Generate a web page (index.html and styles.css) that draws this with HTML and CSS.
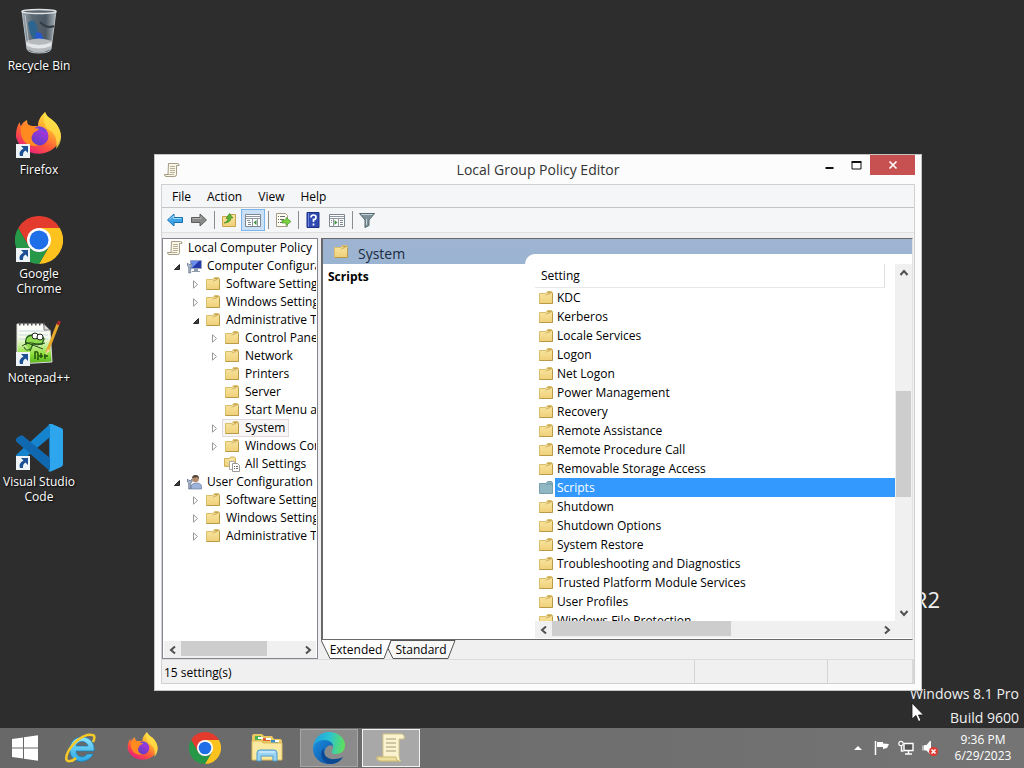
FILE: index.html
```html
<!DOCTYPE html>
<html lang="en">
<head>
  <meta charset="utf-8">
  <title>Local Group Policy Editor</title>
  <link rel="stylesheet" href="styles.css">
</head>
<body>
  <svg class="sprite" aria-hidden="true">
    <defs>
      <linearGradient id="gFolder" x1="0" y1="0" x2="0" y2="1"><stop offset="0" stop-color="#f8e6a4"/><stop offset="1" stop-color="#f0d078"/></linearGradient>
      <linearGradient id="gFox" x1=".85" y1="0" x2=".2" y2="1"><stop offset="0" stop-color="#fff44f"/><stop offset=".35" stop-color="#ffb02e"/><stop offset=".65" stop-color="#ff5a36"/><stop offset="1" stop-color="#e31587"/></linearGradient>
      <linearGradient id="gFoxIn" x1=".8" y1="0" x2=".3" y2="1"><stop offset="0" stop-color="#b833e1"/><stop offset="1" stop-color="#5b3fc4"/></linearGradient>
      <linearGradient id="gBin" x1="0" y1="0" x2="1" y2="0"><stop offset="0" stop-color="#9aa4ac"/><stop offset=".3" stop-color="#5b6974"/><stop offset=".7" stop-color="#4c5863"/><stop offset="1" stop-color="#aab3ba"/></linearGradient>
      <linearGradient id="gNote" x1="0" y1="0" x2="0" y2="1"><stop offset="0" stop-color="#fff"/><stop offset=".35" stop-color="#f4fbe8"/><stop offset=".75" stop-color="#8fe03a"/><stop offset="1" stop-color="#4fae1c"/></linearGradient>
      <linearGradient id="gEdge" x1="0" y1=".3" x2="1" y2=".4"><stop offset="0" stop-color="#1f9fe0"/><stop offset=".5" stop-color="#2bc3d2"/><stop offset="1" stop-color="#5fe05a"/></linearGradient>
      <linearGradient id="gEdgeB" x1="0" y1="0" x2="1" y2="1"><stop offset="0" stop-color="#1b8fe0"/><stop offset="1" stop-color="#0d4da0"/></linearGradient>
      <linearGradient id="gIe" x1="0" y1="0" x2="0" y2="1"><stop offset="0" stop-color="#8fe3fb"/><stop offset="1" stop-color="#2aa8e6"/></linearGradient>
    </defs>
    <symbol id="folder" viewBox="0 0 16 16">
      <path d="M1.500 3.500h6.500l1.500-2h4l1 1.500v10.500h-13z" fill="url(#gFolder)" stroke="#d9be6c"/>
      <path d="M8 5.500l1.500-1.500h2l1-1.500 2 .5M9.500 2.500h3" stroke="#b9963d" stroke-width=".8" fill="none"/>
      <path d="M14.500 4v9.500h-13" stroke="#b89a48" fill="none"/>
    </symbol>
    <symbol id="folder-selected" viewBox="0 0 16 16">
      <path d="M1.500 3.500h6.500l1.500-2h4l1 1.500v10.500h-13z" fill="#8fb8c4" stroke="#789fab"/>
      <path d="M8 5.500l1.500-1.500h5" stroke="#68919f" fill="none"/>
    </symbol>
    <symbol id="scroll" viewBox="0 0 16 16">
      <path d="M4.500 1.500h9q2 0 1.500 2h-2.500v9q0 2-2 2h-8.500q-1.500 0-1.500-2h3.500z" fill="#fbf7e4" stroke="#a39c88"/>
      <path d="M6 4.500h5M6 6.500h5M6 8.500h5M6 10.500h5M4 12.500h6" stroke="#b5af9c" fill="none"/>
    </symbol>
    <symbol id="closed" viewBox="0 0 9 9"><path d="M2.500 .8v7.400l4-3.700z" fill="#fff" stroke="#999"/></symbol>
    <symbol id="open" viewBox="0 0 9 9"><path d="M7.500 2.500v5h-5z" fill="#404040" stroke="#262626"/></symbol>
    <symbol id="computer" viewBox="0 0 16 16">
      <path d="M4.500 2.500h11v8h-11z" fill="#2538a8" stroke="#9aa8c4"/><path d="M5 3h8l-7 7h-1z" fill="#6c8df0"/>
      <path d="M8 11h4v2h2v1h-8v-1h2z" fill="#8e9aad"/>
      <path d="M1.500 5v3l1.200 1v6h2v-6l1.300-1v-3l-1.300 1.500h-1.700z" fill="#a8b4c8" stroke="#657792" stroke-width=".7"/>
    </symbol>
    <symbol id="user" viewBox="0 0 16 16">
      <path d="M5 15v-3q1-3 5-3 5 0 5.500 3v3z" fill="#9eb3d8" stroke="#6b80a8" stroke-width=".7"/><circle cx="9.500" cy="5" r="3.300" fill="#b48b6c"/><path d="M6 4q.5-3.500 4-3 3 0 3 4l-2-2q-3 1-5 1z" fill="#51443b"/>
      <path d="M1.500 5v3l1.200 1v6h2v-6l1.300-1v-3l-1.300 1.500h-1.700z" fill="#a8b4c8" stroke="#566884" stroke-width=".7"/>
    </symbol>
    <symbol id="settings" viewBox="0 0 16 16">
      <path d="M.5 2.500h5l1-1.500h4l1 1.500v8h-11z" fill="url(#gFolder)" stroke="#cfb15a"/>
      <path d="M5.500 5.500h5v8h-5z" fill="#fff" stroke="#aaa"/><path d="M8.500 7.500h5l2 2v6h-7z" fill="#fff" stroke="#999"/><path d="M10 10.500h1m1 0h2m-4 2h1m1 0h2" stroke="#666"/>
    </symbol>
    <symbol id="shortcut" viewBox="0 0 14 14">
      <path d="M0 0h14v14h-14z" fill="#eef3f8"/><path d="M5 2h7v7l-2.500-2.500q-3 1.500-2.500 5.500h-3q-2-4.500 3.500-7.500z" fill="#1c4f94"/>
    </symbol>
    <symbol id="firefox" viewBox="0 0 48 48">
      <path d="M30 0c1 3 3 5 6 7 6 4 10 11 10 18a23 21 0 0 1-45 0c0-7 1-11 4-15 0 2 0 3 1 4 1-3 4-5 6-6 0 3 1 5 3 6h8c0-6 3-10 7-14z" fill="url(#gFox)"/>
      <path d="M30 0c1 3 3 5 6 7 6 4 10 11 10 18 0 5-2 9-5 12 2-9-1-16-7-19-5-3-6-11-4-18z" fill="#ffe14a" opacity=".75"/>
      <circle cx="24" cy="24" r="9.500" fill="url(#gFoxIn)"/>
      <path d="M6 14c5-3 10 0 13 0s5 1 5 3c-2 3-5 2-6 5-4 5 1 11 6 11-11 4-20-5-18-19z" fill="#ff8a20"/>
      <path d="M19 16c6-4 13 0 13 6-3-4-7-4-10-3l3-2z" fill="#7748d8"/>
    </symbol>
    <symbol id="chrome" viewBox="0 0 48 48">
      <path d="M24 12h20.800a24 24 0 0 0-41.600 0l10.400 18z" fill="#e33b2e"/>
      <path d="M24 12h20.800a24 24 0 0 1-20.800 36l10.400-18z" fill="#fcc31e"/>
      <path d="M13.600 30a12 12 0 0 0 20.800 0l-10.400 18a24 24 0 0 1-20.800-36z" fill="#279847"/>
      <circle cx="24" cy="24" r="12" fill="#fff"/><circle cx="24" cy="24" r="9.500" fill="#1f70e8"/>
    </symbol>
    <symbol id="chevron-up" viewBox="0 0 10 10"><path d="M1.500 7l3.500-4 3.500 4" fill="none" stroke="#505050" stroke-width="2"/></symbol>
    <symbol id="chevron-down" viewBox="0 0 10 10"><path d="M1.500 3l3.500 4 3.500-4" fill="none" stroke="#505050" stroke-width="2"/></symbol>
    <symbol id="chevron-left" viewBox="0 0 10 10"><path d="M7 1.500l-4 3.500 4 3.500" fill="none" stroke="#505050" stroke-width="2"/></symbol>
    <symbol id="chevron-right" viewBox="0 0 10 10"><path d="M3 1.500l4 3.500-4 3.500" fill="none" stroke="#505050" stroke-width="2"/></symbol>
  </svg>

  <main class="desktop">
    <div class="shortcuts">
      <a class="shortcut" href="#">
        <svg class="shortcut-icon" viewBox="0 0 48 48">
          <path d="M7 3h34l-5 38q-1 4-12 4t-12-4z" fill="url(#gBin)" stroke="#b7bfc5"/>
          <path d="M13 15q6-6 9 3l1 7 7 7h-11l-4-7z" fill="#2d658e"/><path d="M21 24l5 1 3 7-9 1z" fill="#2858cf"/>
          <path d="M25 14q7 7 14 4" stroke="#343c44" stroke-width="2" fill="none"/>
          <path d="M11 33q13-5 26 0l-1 8q-12 7-24 0z" fill="#b6babd"/><path d="M11 34q13 6 26 0l-1 4q-12 5-24 0z" fill="#e4e6e7"/>
          <ellipse cx="24" cy="3.500" rx="17" ry="2" fill="#5c666e" stroke="#dfe3e6" stroke-width="1.500"/>
          <path d="M10 7l4 31" stroke="#d6dce0" opacity=".7"/>
        </svg>
        <span>Recycle Bin</span>
      </a>
      <a class="shortcut" href="#">
        <svg class="shortcut-icon" viewBox="0 0 48 48"><use href="#firefox" width="48" height="48"/><use href="#shortcut" x="1" y="32" width="14" height="14"/></svg>
        <span>Firefox</span>
      </a>
      <a class="shortcut" href="#">
        <svg class="shortcut-icon" viewBox="0 0 48 48"><use href="#chrome" width="48" height="48"/><use href="#shortcut" x="1" y="32" width="14" height="14"/></svg>
        <span>Google Chrome</span>
      </a>
      <a class="shortcut" href="#">
        <svg class="shortcut-icon" viewBox="0 0 48 48">
          <path d="M2 4h27l6 6 2 32-35 2z" fill="url(#gNote)" stroke="#ddd"/>
          <path d="M4 4h26" stroke="#555" stroke-width="3" stroke-dasharray="1.500 2.500"/><path d="M4 11h28M4 15h29M4 19h29" stroke="#c7d6df"/>
          <path d="M29 4v6h6z" fill="#ddd" stroke="#777"/>
          <path d="M11 25q-2-9 6-10l5 3q5-4 7 1l-2 5h-9l-3 7" fill="#8edc4d" stroke="#27601a" stroke-width="1.300"/>
          <circle cx="20" cy="16" r="3" fill="#fff" stroke="#222"/><circle cx="25" cy="17" r="3" fill="#fff" stroke="#222"/>
          <path d="M7 26q8-6 15-1l8-2M10 22l18 7M15 29q-4 3-6-2" stroke="#284b1b" fill="none"/>
          <path d="M20 39v-7q3-1 3 2v6M26 33v5M24 36h4M30 34v5M29 36h4" stroke="#26520d" stroke-width="1.500" fill="none"/>
          <path d="M32 32 43 4" stroke="#e6a92c" stroke-width="3"/><path d="M43 5l1.500-4" stroke="#b22b2b" stroke-width="3"/><path d="M33 29l-3 6 5-4z" fill="#f2d7a3"/>
          <use href="#shortcut" x="1" y="32" width="14" height="14"/>
        </svg>
        <span>Notepad++</span>
      </a>
      <a class="shortcut" href="#">
        <svg class="shortcut-icon" viewBox="0 0 48 48">
          <path d="M35 0 48 5v36L35 47 2 18q-2-2 0-4l3-2q2-1 3 0l26 22V13z" fill="#1478c5"/>
          <path d="M35 13 8 36q-1 1-3 0l-3-3q-2-1 0-3L35 0z" fill="#1583cd"/>
          <path d="M2 18q-2-2 0-4l3-2q2-1 3 0l27 22v13z" fill="#1069b0"/>
          <path d="M33 0q2-1 4 0l9 4q2 1 2 3v33q0 2-2 3l-9 4q-2 1-4 0 2 0 2-4V4q0-4-2-4z" fill="#2ea6ee"/>
          <use href="#shortcut" x="1" y="32" width="14" height="14"/>
        </svg>
        <span>Visual Studio Code</span>
      </a>
    </div>

    <div class="edition">R2</div>
    <div class="watermark">
      <div>Windows 8.1 Pro</div>
      <div>Build 9600</div>
    </div>

    <section class="window">
      <header class="titlebar">
        <svg class="titlebar-icon icon" viewBox="0 0 16 16"><use href="#scroll"/></svg>
        <h1 class="title">Local Group Policy Editor</h1>
        <div class="window-buttons">
          <button class="window-btn" aria-label="Minimize"><svg width="11" height="11" viewBox="0 0 11 11"><path d="M1.500 8h8" stroke="#111" stroke-width="2"/></svg></button>
          <button class="window-btn" aria-label="Maximize"><svg width="11" height="11" viewBox="0 0 11 11"><path d="M1 2.500h9v6.500h-9z" fill="none" stroke="#111"/><path d="M.5 2h10" stroke="#111" stroke-width="2"/></svg></button>
          <button class="window-btn window-close" aria-label="Close"><svg width="10" height="10" viewBox="0 0 10 10"><path d="M1.500 1.500l7 7M8.500 1.500l-7 7" stroke="#fff" stroke-width="1.600"/></svg></button>
        </div>
      </header>

      <div class="client">
        <nav class="menubar">
          <button class="menu">File</button>
          <button class="menu">Action</button>
          <button class="menu">View</button>
          <button class="menu">Help</button>
        </nav>

        <div class="toolbar">
          <button class="tool" aria-label="Back"><svg class="icon" viewBox="0 0 16 16"><path d="M.5 8l6.500-6v3.500h8.500v5h-8.500v3.500z" fill="#3da4e8" stroke="#1c6fae"/><path d="M2.500 7.500l4-3.500v2.500h8" stroke="#9bdcff" fill="none"/></svg></button>
          <button class="tool" aria-label="Forward"><svg class="icon" viewBox="0 0 16 16"><path d="M15.500 8l-6.500-6v3.500h-8.500v5h8.500v3.500z" fill="#8a8a8a" stroke="#5c5c5c"/><path d="M1.500 6.500h8.500v-2" stroke="#b4b4b4" fill="none"/></svg></button>
          <span class="separator"></span>
          <button class="tool" aria-label="Up one level"><svg class="icon" viewBox="0 0 16 16"><path d="M1.500 4.500h6l1-2h6v12h-13z" fill="url(#gFolder)" stroke="#c9a348"/><path d="M3 11q4-1 4-5l-2 .5 3.500-5 3.500 4.500-2-.2q0 5-7 5.200z" fill="#59b535" stroke="#328018" stroke-width=".6"/></svg></button>
          <button class="tool tool-active" aria-label="Show console tree"><svg class="icon" viewBox="0 0 16 16"><path d="M.5 2.500h15v12h-15z" fill="#fff" stroke="#7f8892"/><path d="M1 4.500h14M1 6.500h14M7.500 7v7M12.500 7v7" stroke="#9098a2"/><path d="M2 8.500h3M3 10.500h3M3 12.500h3" stroke="#7e8896"/><path d="M11.500 8v5l-3-2.500z" fill="#3d9440"/></svg></button>
          <span class="separator"></span>
          <button class="tool" aria-label="Export list"><svg class="icon" viewBox="0 0 16 16"><path d="M1.500 1.500h9l2 2v11h-11z" fill="#fffdf4" stroke="#a49c80"/><path d="M3 4.500h1m1 0h5M3 7.500h1m1 0h4M3 10.500h1m1 0h4" stroke="#6c6c6c"/><path d="M7 8h4v-2.500l5 4-5 4v-2.500h-4z" fill="#7bd33f" stroke="#48942a" stroke-width=".7"/></svg></button>
          <span class="separator"></span>
          <button class="tool" aria-label="Help"><svg class="icon" viewBox="0 0 16 16"><path d="M2 .5h12v15h-12z" fill="#304ab4" stroke="#1d2f82"/><path d="M3.500 1v14" stroke="#6985e0"/><path d="M6 5.500q0-2.500 2.500-2.500t2.500 2.300-2.500 2.200v2.500M8.500 11.500v2" fill="none" stroke="#fff" stroke-width="1.700"/></svg></button>
          <button class="tool" aria-label="Show action pane"><svg class="icon" viewBox="0 0 16 16"><path d="M.5 2.500h15v12h-15z" fill="#fff" stroke="#7f8892"/><path d="M1 4.500h14M1 6.500h14M9.500 7v7M4.500 7v7" stroke="#9098a2"/><path d="M11 8.500h3M11 10.500h3M11 12.500h3M2 8.500h1M2 10.500h1" stroke="#7e8896"/><path d="M5.500 8v5l3-2.500z" fill="#3d9440"/></svg></button>
          <span class="separator"></span>
          <button class="tool" aria-label="Filter"><svg class="icon" viewBox="0 0 16 16"><path d="M.5 1.500h15l-5.500 6.500v5.500l-4 2v-7.500z" fill="#7d9098" stroke="#536871"/><path d="M2.500 2.500h11M7.500 7v6" stroke="#c8d5da"/></svg></button>
        </div>

        <div class="panes">
          <div class="tree-pane">
            <ul class="tree">
              <li class="node"><svg class="icon"><use href="#scroll"/></svg><span>Local Computer Policy</span></li>
              <li class="node level-1"><svg class="arrow"><use href="#open"/></svg><svg class="icon"><use href="#computer"/></svg><span>Computer Configuration</span></li>
              <li class="node level-2"><svg class="arrow"><use href="#closed"/></svg><svg class="icon"><use href="#folder"/></svg><span>Software Settings</span></li>
              <li class="node level-2"><svg class="arrow"><use href="#closed"/></svg><svg class="icon"><use href="#folder"/></svg><span>Windows Settings</span></li>
              <li class="node level-2"><svg class="arrow"><use href="#open"/></svg><svg class="icon"><use href="#folder"/></svg><span>Administrative Templates</span></li>
              <li class="node level-3"><svg class="arrow"><use href="#closed"/></svg><svg class="icon"><use href="#folder"/></svg><span>Control Panel</span></li>
              <li class="node level-3"><svg class="arrow"><use href="#closed"/></svg><svg class="icon"><use href="#folder"/></svg><span>Network</span></li>
              <li class="node level-3"><span class="arrow"></span><svg class="icon"><use href="#folder"/></svg><span>Printers</span></li>
              <li class="node level-3"><span class="arrow"></span><svg class="icon"><use href="#folder"/></svg><span>Server</span></li>
              <li class="node level-3"><span class="arrow"></span><svg class="icon"><use href="#folder"/></svg><span>Start Menu and Taskbar</span></li>
              <li class="node level-3"><svg class="arrow"><use href="#closed"/></svg><span class="node-selected"><svg class="icon"><use href="#folder"/></svg><span>System</span></span></li>
              <li class="node level-3"><svg class="arrow"><use href="#closed"/></svg><svg class="icon"><use href="#folder"/></svg><span>Windows Components</span></li>
              <li class="node level-3"><span class="arrow"></span><svg class="icon"><use href="#settings"/></svg><span>All Settings</span></li>
              <li class="node level-1"><svg class="arrow"><use href="#open"/></svg><svg class="icon"><use href="#user"/></svg><span>User Configuration</span></li>
              <li class="node level-2"><svg class="arrow"><use href="#closed"/></svg><svg class="icon"><use href="#folder"/></svg><span>Software Settings</span></li>
              <li class="node level-2"><svg class="arrow"><use href="#closed"/></svg><svg class="icon"><use href="#folder"/></svg><span>Windows Settings</span></li>
              <li class="node level-2"><svg class="arrow"><use href="#closed"/></svg><svg class="icon"><use href="#folder"/></svg><span>Administrative Templates</span></li>
            </ul>
            <div class="scrollbar">
              <button class="scroll-btn" aria-label="Scroll left"><svg class="chevron"><use href="#chevron-left"/></svg></button>
              <div class="scroll-track"><div class="scroll-thumb thumb-tree"></div></div>
              <button class="scroll-btn" aria-label="Scroll right"><svg class="chevron"><use href="#chevron-right"/></svg></button>
            </div>
          </div>

          <div class="result-pane">
            <div class="result">
              <div class="info">
                <h2 class="info-header"><svg class="icon"><use href="#folder"/></svg><span>System</span></h2>
                <div class="info-body">Scripts</div>
              </div>
              <div class="list">
                <div class="list-view">
                  <div class="list-header"><span>Setting</span></div>
                  <ul class="settings">
                    <li class="setting"><svg class="icon"><use href="#folder"/></svg><span>KDC</span></li>
                    <li class="setting"><svg class="icon"><use href="#folder"/></svg><span>Kerberos</span></li>
                    <li class="setting"><svg class="icon"><use href="#folder"/></svg><span>Locale Services</span></li>
                    <li class="setting"><svg class="icon"><use href="#folder"/></svg><span>Logon</span></li>
                    <li class="setting"><svg class="icon"><use href="#folder"/></svg><span>Net Logon</span></li>
                    <li class="setting"><svg class="icon"><use href="#folder"/></svg><span>Power Management</span></li>
                    <li class="setting"><svg class="icon"><use href="#folder"/></svg><span>Recovery</span></li>
                    <li class="setting"><svg class="icon"><use href="#folder"/></svg><span>Remote Assistance</span></li>
                    <li class="setting"><svg class="icon"><use href="#folder"/></svg><span>Remote Procedure Call</span></li>
                    <li class="setting"><svg class="icon"><use href="#folder"/></svg><span>Removable Storage Access</span></li>
                    <li class="setting setting-selected"><svg class="icon"><use href="#folder-selected"/></svg><span>Scripts</span></li>
                    <li class="setting"><svg class="icon"><use href="#folder"/></svg><span>Shutdown</span></li>
                    <li class="setting"><svg class="icon"><use href="#folder"/></svg><span>Shutdown Options</span></li>
                    <li class="setting"><svg class="icon"><use href="#folder"/></svg><span>System Restore</span></li>
                    <li class="setting"><svg class="icon"><use href="#folder"/></svg><span>Troubleshooting and Diagnostics</span></li>
                    <li class="setting"><svg class="icon"><use href="#folder"/></svg><span>Trusted Platform Module Services</span></li>
                    <li class="setting"><svg class="icon"><use href="#folder"/></svg><span>User Profiles</span></li>
                    <li class="setting"><svg class="icon"><use href="#folder"/></svg><span>Windows File Protection</span></li>
                  </ul>
                </div>
                <div class="scrollbar scrollbar-vertical">
                  <button class="scroll-btn" aria-label="Scroll up"><svg class="chevron"><use href="#chevron-up"/></svg></button>
                  <div class="scroll-track"><div class="scroll-thumb thumb-list-y"></div></div>
                  <button class="scroll-btn" aria-label="Scroll down"><svg class="chevron"><use href="#chevron-down"/></svg></button>
                </div>
                <div class="scrollbar">
                  <button class="scroll-btn" aria-label="Scroll left"><svg class="chevron"><use href="#chevron-left"/></svg></button>
                  <div class="scroll-track"><div class="scroll-thumb thumb-list-x"></div></div>
                  <button class="scroll-btn" aria-label="Scroll right"><svg class="chevron"><use href="#chevron-right"/></svg></button>
                </div>
                <div class="scroll-corner"></div>
              </div>
            </div>
            <div class="tabs">
              <button class="tab tab-active"><svg class="tab-shape" viewBox="0 0 70 19" preserveAspectRatio="none"><path d="M0 0l9 18.500h54l7-18.500" fill="#fff" stroke="#555"/></svg><span>Extended</span></button>
              <button class="tab"><svg class="tab-shape" viewBox="0 0 70 19" preserveAspectRatio="none"><path d="M5 .5l-3 8 5 10h55l7-18z" fill="#f7f7f5" stroke="#555"/></svg><span>Standard</span></button>
            </div>
          </div>
        </div>

        <footer class="statusbar">
          <span class="status-text">15 setting(s)</span>
          <span class="status-cell"></span>
          <span class="status-cell status-end"></span>
        </footer>
      </div>
    </section>

    <svg class="cursor" viewBox="0 0 13 20"><path d="M1 1v16l4-3.500 2.500 6 2.500-1-2.500-5.500h5z" fill="#fff" stroke="#111" stroke-width=".8"/></svg>
  </main>

  <footer class="taskbar">
    <button class="start" aria-label="Start"><svg width="28" height="28" viewBox="0 0 28 28"><path d="M1 5l11-1.500v10h-11zM13 3.300l14-2v12.200h-14zM1 14.500h11v10l-11-1.500zM13 14.500h14v12.200l-14-2z" fill="#fff"/></svg></button>
    <button class="task" aria-label="Internet Explorer">
      <svg class="task-icon" viewBox="0 0 32 32">
        <path d="M17 5c8 0 13 6 12 14h-18c0 6 8 8 11 3h6c-5 11-24 10-23-5C5 10 10 5 17 5zm-6 9h12c-1-6-11-6-12 0z" fill="url(#gIe)" stroke="#1681bd" stroke-width=".7"/>
        <path d="M28 10c2-4 2-7-1-7C20 1 8 10 3 20c-3 6-2 10 2 9 2 0 4-1 6-3" fill="none" stroke="#f4c928" stroke-width="2.500"/>
      </svg>
    </button>
    <button class="task" aria-label="Firefox"><svg class="task-icon"><use href="#firefox"/></svg></button>
    <button class="task" aria-label="Google Chrome"><svg class="task-icon"><use href="#chrome"/></svg></button>
    <button class="task" aria-label="File Explorer">
      <svg class="task-icon" viewBox="0 0 32 32">
        <path d="M1 4q0-2 2-2h8l2 2h8l2 3h6q2 0 2 2v18H1z" fill="#e9c75f"/><path d="M4 4h6v4H4z" fill="#4caf50"/><path d="M12 6h7v3h-7z" fill="#d9603a"/><path d="M20 8h7v3h-7z" fill="#3a8fd0"/>
        <path d="M7 5h5v2H7zM15 6h5v2h-5zM24 8h4v2h-4z" fill="#fff"/>
        <path d="M1 9h9l2 2h19v17H1z" fill="#fae9a0" stroke="#ddbb58"/>
        <path d="M6 29v-8q0-3 3-3h14q3 0 3 3v8h-4v-5h-12v5z" fill="#9bd3f2" stroke="#4a9bd0"/><path d="M8 20h16" stroke="#e5f7ff"/>
      </svg>
    </button>
    <button class="task task-open" aria-label="Microsoft Edge">
      <svg class="task-icon" viewBox="0 0 32 32">
        <path d="M0 17C0 7 7 0 16 0c9 0 16 6 16 13 0 6-4 9-9 9-4 0-5-2-4-3 3-4 1-9-5-9C7 10 2 13 0 17z" fill="url(#gEdge)"/>
        <path d="M0 17c1-6 6-9 11-9 6 0 9 3 9 7-1-2-3-2-5-1-6 4-4 14 4 18C8 33 0 26 0 17z" fill="url(#gEdgeB)"/>
        <path d="M11 16c-2 7 4 12 11 11 3 0 6-1 8-2-3 5-8 7-12 7-8-1-13-10-7-16z" fill="#0b4a93"/>
      </svg>
    </button>
    <button class="task task-open task-current" aria-label="Local Group Policy Editor">
      <svg class="task-icon" viewBox="0 0 32 32">
        <path d="M8 2h18q4 0 3 5h-5v16q0 5 2 6H6q-5 0-4-4h6z" fill="#faf3cd" stroke="#d2c48b"/><path d="M2 25h19q0 4 3 4H6q-4 0-4-4z" fill="#eddf9f" stroke="#cab86f"/>
        <path d="M11 7h10M11 11h10M11 15h10M11 19h10" stroke="#a49c7c" stroke-width="1.200"/>
      </svg>
    </button>

    <div class="tray">
      <button class="tray-btn" aria-label="Show hidden icons"><svg width="8" height="6" viewBox="0 0 8 6"><path d="M0 5l4-4 4 4z" fill="#fff"/></svg></button>
      <button class="tray-btn" aria-label="Action Center"><svg class="icon" viewBox="0 0 16 16"><path d="M1.500 1v14" stroke="#fff" stroke-width="1.500"/><path d="M3 2h6v1.500l6 .5-2 4-4 1v-2h-6z" fill="#fff"/></svg></button>
      <button class="tray-btn" aria-label="Network"><svg class="icon" viewBox="0 0 16 16"><path d="M6 3.500h9v7h-9z" fill="#555" stroke="#fff" stroke-width="1.400"/><path d="M10.500 11v2.500M7 14h7M3.500 6v5h2" stroke="#fff" stroke-width="1.400" fill="none"/><circle cx="3" cy="3.500" r="2.200" fill="#666" stroke="#fff" stroke-width="1.200"/></svg></button>
      <button class="tray-btn" aria-label="Volume muted"><svg class="icon" viewBox="0 0 16 16"><path d="M1 5.500v5M2.500 5.500h2l4-4.500v13l-4-4h-2z" stroke="#fff" fill="#fff"/><circle cx="11.500" cy="11.500" r="4.500" fill="#df3a32"/><path d="M9.500 9.500l4 4m0-4l-4 4" stroke="#fff" stroke-width="1.500"/></svg></button>
      <button class="clock"><span>9:36 PM</span><span>6/29/2023</span></button>
    </div>
  </footer>
</body>
</html>
```

FILE: styles.css
```css
* {
  box-sizing: border-box;
}

body {
  margin: 0;
  height: 100vh;
  display: flex;
  flex-direction: column;
  overflow: hidden;
  background: #2d2d2d;
  color: #000;
  font-family: "Open Sans", "Noto Sans", sans-serif;
  font-size: 12px;
  line-height: 18px;
}

button {
  margin: 0;
  padding: 0;
  border: none;
  background: none;
  color: inherit;
  font: inherit;
}

ul {
  list-style: none;
  margin: 0;
  padding: 0;
}

svg {
  display: block;
  flex: none;
}

.sprite {
  position: absolute;
  width: 0;
  height: 0;
}

.icon {
  width: 16px;
  height: 16px;
}

/* desktop */
.desktop {
  position: relative;
  flex: 1;
  min-height: 0;
}

.shortcuts {
  display: grid;
  grid-auto-rows: 104px;
  width: 78px;
}

.shortcut {
  display: flex;
  flex-direction: column;
  align-items: center;
  gap: 2px;
  padding-top: 8px;
  color: #fff;
  line-height: 15px;
  text-align: center;
  text-decoration: none;
  text-shadow: 1px 1px 2px #000;
}

.shortcut-icon {
  width: 48px;
  height: 48px;
}

.edition,
.watermark {
  position: absolute;
  color: #f0f0f0;
}

.edition {
  right: 84px;
  bottom: 114px;
  font-size: 22px;
  line-height: 30px;
}

.watermark {
  right: 5px;
  bottom: -2px;
  font-size: 14px;
  line-height: 24px;
  text-align: right;
}

.cursor {
  position: absolute;
  left: 911px;
  top: 702px;
  width: 13px;
  height: 20px;
}

/* window */
.window {
  position: absolute;
  top: 154px;
  right: 102px;
  bottom: 37px;
  left: 154px;
  display: flex;
  flex-direction: column;
  padding: 0 6px 6px;
  background: #fcfcfc;
  border: 1px solid #c4c4c4;
}

.titlebar {
  display: grid;
  grid-template-columns: 1fr auto 1fr;
  height: 29px;
}

.titlebar-icon {
  margin: 7px 0 0 3px;
}

.title {
  margin: 0;
  font-size: 14px;
  font-weight: 400;
  line-height: 29px;
  color: #333;
}

.window-buttons {
  display: flex;
  justify-content: flex-end;
}

.window-btn {
  display: flex;
  align-items: center;
  justify-content: center;
  width: 27px;
  height: 20px;
}

.window-close {
  width: 45px;
  background: #c75050;
}

.client {
  flex: 1;
  min-height: 0;
  display: flex;
  flex-direction: column;
  background: #f0f0f0;
  border: 1px solid #d0d0d0;
}

.menubar {
  display: flex;
  height: 23px;
  padding: 1px 2px 0;
  background: #f5f6f7;
  border-bottom: 1px solid #c4c4c4;
}

.menu {
  padding: 0 8px;
}

.toolbar {
  display: flex;
  align-items: center;
  height: 25px;
  padding-left: 1px;
  background: #f5f6f7;
  border-bottom: 1px solid #e0e0e0;
}

.tool {
  display: flex;
  align-items: center;
  justify-content: center;
  width: 24px;
  height: 22px;
}

.tool-active {
  background: #c9e0f7;
  border: 1px solid #7eb4ea;
}

.separator {
  width: 6px;
  height: 18px;
  background: linear-gradient(#8d8d8d, #8d8d8d) center / 1px 100% no-repeat;
}

.panes {
  flex: 1;
  min-height: 0;
  display: grid;
  grid-template-columns: 156px 1fr;
  grid-template-rows: minmax(0, 1fr);
  gap: 3px;
  padding-top: 5px;
}

/* console tree */
.tree-pane {
  display: flex;
  flex-direction: column;
  min-width: 0;
  padding: 0 1px;
  background: #fff;
  border: 1px solid #828790;
}

.tree {
  flex: 1;
  min-height: 0;
  overflow: hidden;
  padding-left: 3px;
}

.node {
  display: flex;
  align-items: center;
  gap: 5px;
  height: 18px;
  white-space: nowrap;
}

.arrow {
  flex: none;
  width: 9px;
  height: 9px;
}

.level-1 {
  padding-left: 5px;
}

.level-2 {
  padding-left: 24px;
}

.level-3 {
  padding-left: 43px;
}

.node-selected {
  display: flex;
  align-items: center;
  gap: 5px;
  height: 18px;
  margin-left: -2px;
  padding: 0 3px 0 1px;
  background: #f7f5f5;
  border: 1px solid #e2dada;
}

/* scrollbars */
.scrollbar {
  display: flex;
  height: 17px;
  background: #f0f0f0;
}

.scrollbar-vertical {
  flex-direction: column;
  width: 17px;
  height: auto;
}

.scroll-btn {
  display: flex;
  align-items: center;
  justify-content: center;
  width: 17px;
  height: 17px;
}

.chevron {
  width: 10px;
  height: 10px;
}

.scroll-track {
  position: relative;
  flex: 1;
}

.scroll-thumb {
  height: 15px;
  background: #cdcdcd;
}

.thumb-tree {
  width: 73%;
}

.thumb-list-x {
  width: 55%;
}

.thumb-list-y {
  position: absolute;
  top: 34%;
  left: 1px;
  width: 15px;
  height: 33%;
}

/* result pane */
.result-pane {
  display: flex;
  flex-direction: column;
  min-width: 0;
  padding-right: 1px;
}

.result {
  flex: 1;
  min-height: 0;
  display: grid;
  grid-template-columns: 202px 1fr;
  grid-template-rows: minmax(0, 1fr);
  background: linear-gradient(#9fb4d2, #99b4d1 30px);
  border: 2px solid #696969;
  border-width: 1px 1px 1px 2px;
  border-right-color: #e3e3e3;
}

.info {
  display: flex;
  flex-direction: column;
}

.info-header {
  display: flex;
  gap: 9px;
  height: 25px;
  margin: 0;
  padding: 5px 0 0 10px;
  color: #1b2b40;
  font-size: 14px;
  font-weight: 400;
  line-height: 20px;
}

.info-body {
  flex: 1;
  padding: 4px 5px;
  background: #fff;
  font-weight: 700;
}

.list {
  display: grid;
  grid-template-columns: 1fr 17px;
  grid-template-rows: minmax(0, 1fr) 17px;
  min-width: 0;
  min-height: 0;
  margin-top: 15px;
  padding: 10px 0 1px 10px;
  background: #fff;
  border-top-left-radius: 10px;
}

.list-view {
  display: flex;
  flex-direction: column;
  min-height: 0;
  overflow: hidden;
}

.list-header {
  flex: none;
  height: 24px;
  margin-right: 10px;
  padding: 3px 6px;
  border-right: 1px solid #dedfe0;
  border-bottom: 1px solid #e8e8e8;
}

.setting {
  display: flex;
  align-items: center;
  height: 19px;
  padding-left: 3px;
  line-height: 19px;
}

.setting span {
  flex: 1;
  margin-left: 1px;
  padding-left: 2px;
}

.setting-selected span {
  background: #3399ff;
  color: #fff;
}

.scroll-corner {
  background: #f0f0f0;
}

.tabs {
  display: flex;
  height: 19px;
}

.tab {
  position: relative;
  width: 70px;
  height: 19px;
  margin-right: -5px;
}

.tab-active {
  z-index: 1;
}

.tab span {
  position: relative;
}

.tab-shape {
  position: absolute;
  top: 0;
  left: 0;
  width: 100%;
  height: 100%;
}

.statusbar {
  display: flex;
  height: 24px;
  border-top: 1px solid #dcdcdc;
}

.status-text {
  flex: 1;
  padding: 4px 2px 0;
}

.status-cell {
  width: 133px;
  border-left: 1px solid #d4d4d4;
}

.status-end {
  width: 87px;
  border-right: 2px solid #d9d9d9;
}

/* taskbar */
.taskbar {
  flex: none;
  display: flex;
  align-items: center;
  height: 40px;
  background: linear-gradient(90deg, #686868, #747474);
  color: #fff;
}

.start {
  display: flex;
  align-items: center;
  justify-content: center;
  width: 50px;
  height: 40px;
}

.task {
  display: flex;
  align-items: center;
  justify-content: center;
  width: 58px;
  height: 38px;
  margin: 0 2px;
}

.task-open {
  background: #8b8b8b;
  border: 1px solid #a6a6a6;
}

.task-current {
  background: #a8a8a8;
  border-color: #f2f2f2;
}

.task-icon {
  width: 32px;
  height: 32px;
}

.tray {
  display: flex;
  align-items: center;
  margin-left: auto;
}

.tray-btn {
  display: flex;
  align-items: center;
  justify-content: center;
  width: 24px;
  height: 40px;
}

.clock {
  display: flex;
  flex-direction: column;
  width: 82px;
  line-height: 16px;
}
```
